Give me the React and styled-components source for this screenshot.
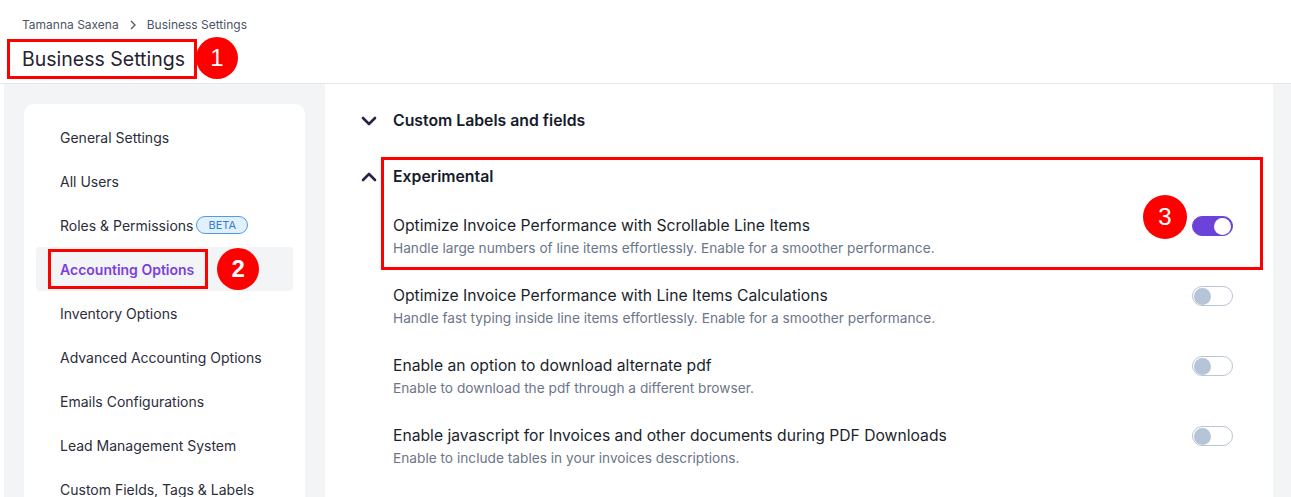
import React from 'react';
import styled, { createGlobalStyle } from 'styled-components';

const GlobalStyle = createGlobalStyle`
  body {
    margin: 0;
    font-family: Inter, Roboto, "Liberation Sans", sans-serif;
    background: #ffffff;
    overflow: hidden;
  }
  * { box-sizing: border-box; }
`;

const Page = styled.div`
  width: 1291px;
  height: 497px;
  display: flex;
  flex-direction: column;
  background: #fff;
`;

const Header = styled.header`
  padding: 18px 0 4px 7px;
  border-bottom: 1px solid #e6e8ec;
`;

const Crumbs = styled.div`
  display: flex;
  align-items: center;
  gap: 10px;
  margin-left: 15px;
  font-size: 12px;
  line-height: 14px;
  color: #4b5563;
`;

const TitleRow = styled.div`
  display: flex;
  align-items: center;
  margin-top: 7px;
`;

const Marked = styled.div`
  border: 3px solid #ff0000;
  padding: ${(p) => p.$pad || '0'};
  display: ${(p) => (p.$inline ? 'inline-flex' : 'block')};
  align-items: center;
`;

const Title = styled.h1`
  margin: 0;
  font-size: 19.5px;
  line-height: 24px;
  font-weight: 400;
  color: #1f2430;
`;

const Dot = styled.span`
  width: ${(p) => p.$size || 42}px;
  height: ${(p) => p.$size || 42}px;
  border-radius: 50%;
  background: #ff0000;
  color: #fff;
  font-family: "Liberation Sans", Arial, sans-serif;
  font-size: 24px;
  display: inline-flex;
  align-items: center;
  justify-content: center;
  flex-shrink: 0;
`;

const Body = styled.div`
  flex: 1;
  display: flex;
  margin-left: 4px;
  background: #f3f4f6;
  padding-right: 18px;
  min-height: 0;
`;

const SideCol = styled.aside`
  width: 321px;
  padding: 20px 20px 0 20px;
`;

const SideCard = styled.nav`
  background: #fff;
  border-radius: 10px 10px 0 0;
  padding: 11px 12px 0;
  height: 100%;
`;

const SideItem = styled.div`
  height: 44px;
  display: flex;
  align-items: center;
  padding-left: ${(p) => (p.$boxed ? '12px' : '24px')};
  border-radius: 4px;
  background: ${(p) => (p.$active ? '#f3f4f6' : 'transparent')};
  color: ${(p) => (p.$active ? '#7a3fe0' : '#2b2d3a')};
  font-weight: ${(p) => (p.$active ? 600 : 400)};
  font-size: 14px;
  white-space: nowrap;
`;

const Beta = styled.span`
  margin-left: 3px;
  height: 18px;
  padding: 0 11px;
  border-radius: 9px;
  border: 1px solid #4a9de6;
  background: #e2f0fc;
  color: #2f7fd4;
  font-size: 11px;
  display: inline-flex;
  align-items: center;
`;

const Main = styled.main`
  flex: 1;
  background: #fff;
  padding: 27px 10px 0 36px;
  display: flex;
  flex-direction: column;
`;

const Section = styled.div`
  display: flex;
  align-items: flex-start;
  gap: 4px;
  margin-bottom: ${(p) => p.$mb || 0}px;
`;

const Chevron = styled.span`
  width: 16px;
  height: 20px;
  display: flex;
  align-items: center;
  justify-content: center;
  margin-top: ${(p) => p.$mt || 0}px;
  color: #25244a;
`;

const Content = styled.div`
  flex: 1;
  display: flex;
  flex-direction: column;
`;

const SectionTitle = styled.div`
  padding-left: 12px;
  font-size: 15.8px;
  line-height: 20px;
  font-weight: 600;
  color: #161b2b;
`;

const Box = styled.div`
  border: 3px solid #ff0000;
  padding: 7px 27px 11px 9px;
  margin-bottom: 16px;
  & > ${SectionTitle} {
    padding-left: 0;
    margin-bottom: 29px;
  }
`;

const Row = styled.div`
  display: flex;
  align-items: flex-start;
  padding: ${(p) => (p.$inBox ? '0' : '0 30px 0 12px')};
  margin-bottom: ${(p) => p.$mb || 0}px;
`;

const RowText = styled.div`
  flex: 1;
`;

const RowTitle = styled.div`
  font-size: 15.7px;
  line-height: 20px;
  color: #1b1f2c;
`;

const RowDesc = styled.div`
  margin-top: 4px;
  font-size: 13.7px;
  line-height: 16px;
  color: #6b7688;
`;

const Toggle = styled.span`
  width: 41px;
  height: 20px;
  border-radius: 10px;
  border: 1.5px solid ${(p) => (p.$on ? '#6c43d8' : '#b9c5d6')};
  background: ${(p) => (p.$on ? '#6c43d8' : '#fff')};
  display: flex;
  align-items: center;
  justify-content: ${(p) => (p.$on ? 'flex-end' : 'flex-start')};
  padding: 0 1px;
  flex-shrink: 0;
  &::after {
    content: '';
    width: 17px;
    height: 17px;
    border-radius: 50%;
    background: ${(p) => (p.$on ? '#fff' : '#b6c4d7')};
  }
`;

const DotInRow = styled(Dot)`
  margin: -21px 5px -30px 0;
`;

const ChevronIcon = ({ up }) => (
  <svg width="16" height="10" viewBox="0 0 16 10" fill="none">
    <polyline
      points={up ? '2,8 8,2 14,8' : '2,2 8,8 14,2'}
      stroke="currentColor"
      strokeWidth="2.6"
      strokeLinecap="round"
      strokeLinejoin="round"
    />
  </svg>
);

const sideItems = [
  'General Settings',
  'All Users',
  'Roles & Permissions',
  'Accounting Options',
  'Inventory Options',
  'Advanced Accounting Options',
  'Emails Configurations',
  'Lead Management System',
  'Custom Fields, Tags & Labels',
];

const options = [
  {
    title: 'Optimize Invoice Performance with Line Items Calculations',
    desc: 'Handle fast typing inside line items effortlessly. Enable for a smoother performance.',
  },
  {
    title: 'Enable an option to download alternate pdf',
    desc: 'Enable to download the pdf through a different browser.',
  },
  {
    title: 'Enable javascript for Invoices and other documents during PDF Downloads',
    desc: 'Enable to include tables in your invoices descriptions.',
  },
];

const App = () => (
  <Page>
    <GlobalStyle />
    <Header>
      <Crumbs>
        <span>Tamanna Saxena</span>
        <svg width="8" height="10" viewBox="0 0 8 10" fill="none">
          <polyline points="2,1 6,5 2,9" stroke="#4b5563" strokeWidth="1.3" />
        </svg>
        <span>Business Settings</span>
      </Crumbs>
      <TitleRow>
        <Marked $pad="5px 9px 5px 12px">
          <Title>Business Settings</Title>
        </Marked>
        <Dot style={{ marginLeft: -1, marginTop: -3 }}>1</Dot>
      </TitleRow>
    </Header>

    <Body>
      <SideCol>
        <SideCard>
          {sideItems.map((name) =>
            name === 'Accounting Options' ? (
              <SideItem key={name} $active $boxed>
                <Marked $inline $pad="0 11px 0 9px" style={{ height: 40 }}>
                  {name}
                </Marked>
                <Dot style={{ marginLeft: 9 }}>2</Dot>
              </SideItem>
            ) : (
              <SideItem key={name}>
                {name}
                {name === 'Roles & Permissions' && <Beta>BETA</Beta>}
              </SideItem>
            ),
          )}
        </SideCard>
      </SideCol>

      <Main>
        <Section $mb={26}>
          <Chevron>
            <ChevronIcon />
          </Chevron>
          <Content>
            <SectionTitle>Custom Labels and fields</SectionTitle>
          </Content>
        </Section>

        <Section>
          <Chevron $mt={10}>
            <ChevronIcon up />
          </Chevron>
          <Content>
            <Box>
              <SectionTitle>Experimental</SectionTitle>
              <Row $inBox>
                <RowText>
                  <RowTitle>Optimize Invoice Performance with Scrollable Line Items</RowTitle>
                  <RowDesc>Handle large numbers of line items effortlessly. Enable for a smoother performance.</RowDesc>
                </RowText>
                <DotInRow $size={44}>3</DotInRow>
                <Toggle $on />
              </Row>
            </Box>
            {options.map((o) => (
              <Row key={o.title} $mb={30}>
                <RowText>
                  <RowTitle>{o.title}</RowTitle>
                  <RowDesc>{o.desc}</RowDesc>
                </RowText>
                <Toggle />
              </Row>
            ))}
          </Content>
        </Section>
      </Main>
    </Body>
  </Page>
);

export default App;
